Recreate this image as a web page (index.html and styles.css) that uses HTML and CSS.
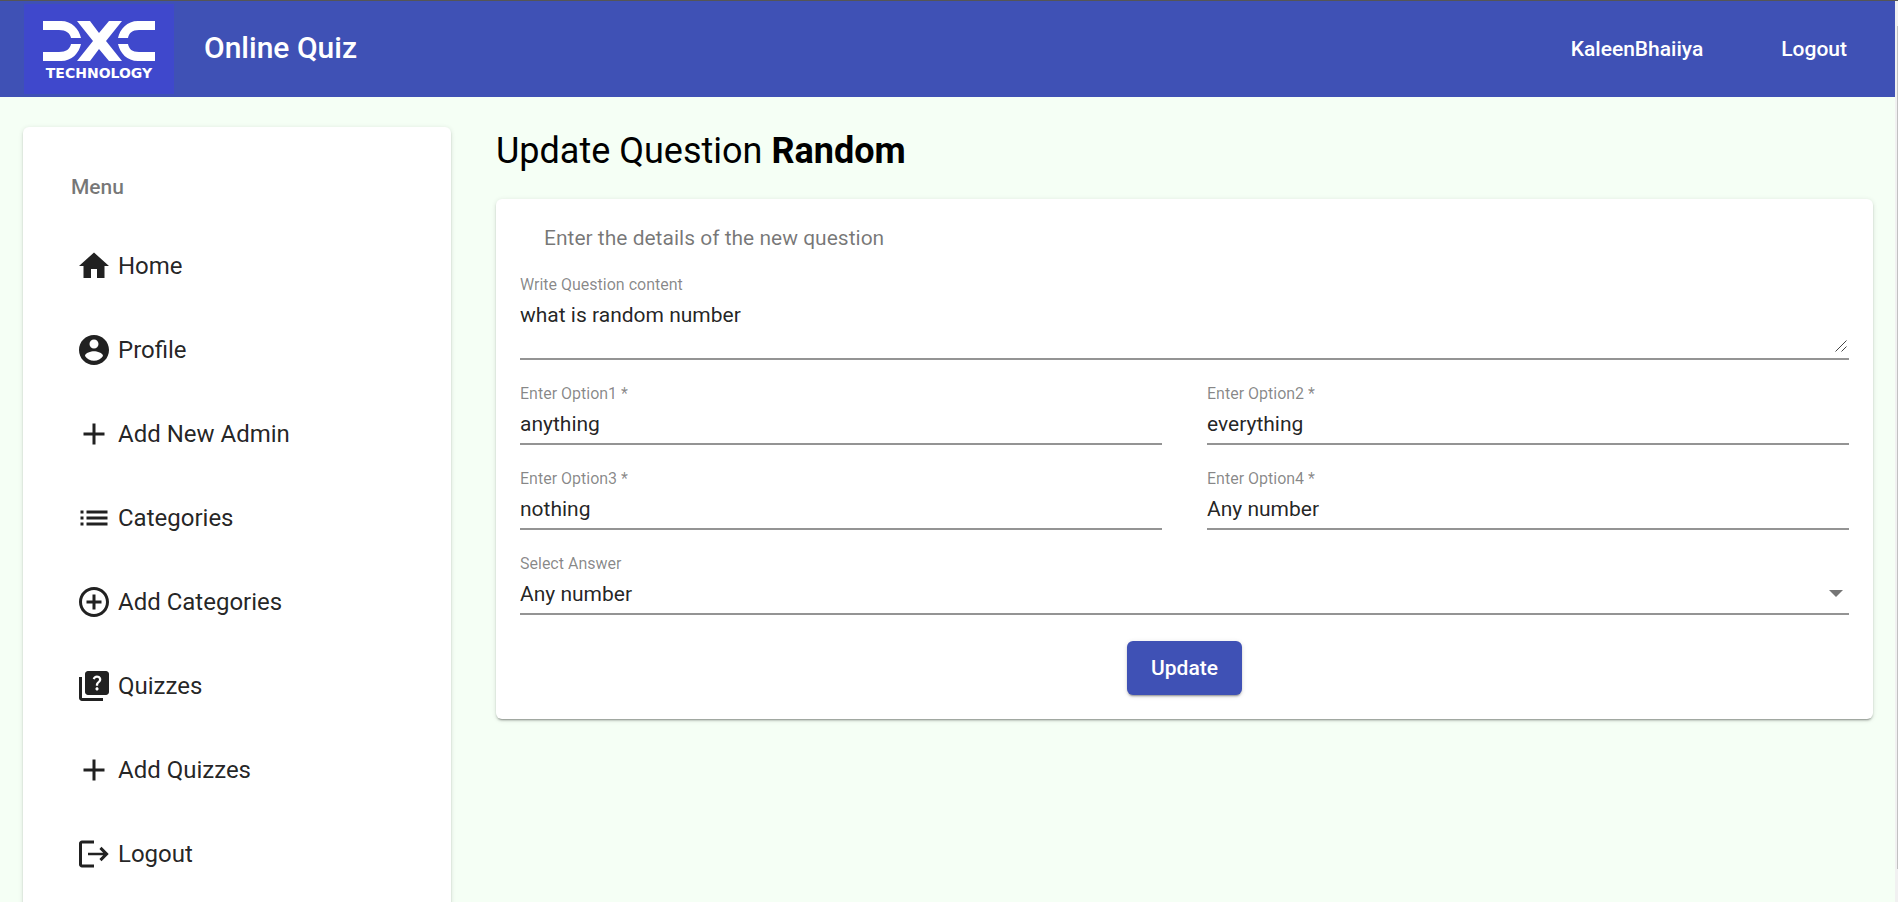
FILE: index.html
```html
<!DOCTYPE html>
<html lang="en">
<head>
<meta charset="utf-8">
<title>Online Quiz</title>
<link rel="stylesheet" href="styles.css">
</head>
<body>
<div class="viewport">
  <div class="page">
    <header class="toolbar">
      <a class="logo" href="#" aria-label="DXC Technology">
        <svg class="logo-mark" viewBox="0 0 112 40" aria-hidden="true">
          <path d="M0 0H18C29 0 36 8 38 17H28C27 12 23 9 16 9H0ZM0 40H18C29 40 36 32 38 23H28C27 28 23 31 16 31H0Z"/>
          <path d="M34 0H47L56 12L66 0H79L63 20L79 40H66L56 28L47 40H34L50 20Z"/>
          <path d="M112 0H95C84 0 77 8 75 17H85C86 12 89 9 96 9H112ZM112 40H95C84 40 77 32 75 23H85C86 28 89 31 96 31H112Z"/>
        </svg>
        <span class="logo-text">TECHNOLOGY</span>
      </a>
      <span class="brand">Online Quiz</span>
      <nav class="account">
        <a href="#">KaleenBhaiiya</a>
        <a href="#">Logout</a>
      </nav>
    </header>
    <div class="content">
      <aside class="card sidebar">
        <h2 class="menu-title">Menu</h2>
        <nav class="menu">
          <a href="#"><svg class="icon" viewBox="0 0 24 24"><path d="M10 20v-6h4v6h5v-8h3L12 3 2 12h3v8z"/></svg>Home</a>
          <a href="#"><svg class="icon" viewBox="0 0 24 24"><path d="M12 2C6.48 2 2 6.48 2 12s4.48 10 10 10 10-4.48 10-10S17.52 2 12 2zm0 3c1.66 0 3 1.34 3 3s-1.34 3-3 3-3-1.34-3-3 1.34-3 3-3zm0 14.2c-2.5 0-4.71-1.28-6-3.22.03-1.99 4-3.08 6-3.08 1.99 0 5.97 1.09 6 3.08-1.29 1.94-3.5 3.22-6 3.22z"/></svg>Profile</a>
          <a href="#"><svg class="icon" viewBox="0 0 24 24"><path d="M19 13h-6v6h-2v-6H5v-2h6V5h2v6h6v2z"/></svg>Add New Admin</a>
          <a href="#"><svg class="icon" viewBox="0 0 24 24"><path d="M3 13h2v-2H3v2zm0 4h2v-2H3v2zm0-8h2V7H3v2zm4 4h14v-2H7v2zm0 4h14v-2H7v2zM7 7v2h14V7H7z"/></svg>Categories</a>
          <a href="#"><svg class="icon" viewBox="0 0 24 24"><path d="M13 7h-2v4H7v2h4v4h2v-4h4v-2h-4V7zm-1-5C6.48 2 2 6.48 2 12s4.48 10 10 10 10-4.48 10-10S17.52 2 12 2zm0 18c-4.41 0-8-3.59-8-8s3.59-8 8-8 8 3.59 8 8-3.59 8-8 8z"/></svg>Add Categories</a>
          <a href="#"><svg class="icon" viewBox="0 0 24 24"><path d="M4 6H2v14c0 1.1.9 2 2 2h14v-2H4V6z"/><path d="M20 2H8c-1.1 0-2 .9-2 2v12c0 1.1.9 2 2 2h12c1.1 0 2-.9 2-2V4c0-1.1-.9-2-2-2zm-5.99 13c-.59 0-1.05-.47-1.05-1.05 0-.59.47-1.04 1.05-1.04.59 0 1.04.45 1.04 1.04-.01.58-.45 1.05-1.04 1.05zm2.5-6.17c-.63.93-1.23 1.21-1.56 1.81-.13.24-.18.4-.18 1.18h-1.52c0-.41-.06-1.08.26-1.65.41-.73 1.18-1.16 1.63-1.8.48-.68.21-1.94-1.14-1.94-.88 0-1.32.67-1.5 1.23l-1.37-.57C11.51 5.96 12.52 5 13.99 5c1.23 0 2.08.56 2.51 1.26.37.61.58 1.73.01 2.57z"/></svg>Quizzes</a>
          <a href="#"><svg class="icon" viewBox="0 0 24 24"><path d="M19 13h-6v6h-2v-6H5v-2h6V5h2v6h6v2z"/></svg>Add Quizzes</a>
          <a href="#"><svg class="icon" viewBox="0 0 24 24"><path d="M12 3H4c-1.1 0-2 .9-2 2v14c0 1.1.9 2 2 2h8v-2H4V5h8V3z"/><path d="M17 7.2l-1.4 1.4 2.5 2.5H8v1.8h10.100l-2.5 2.5 1.4 1.4 4.800-4.800z"/></svg>Logout</a>
        </nav>
      </aside>
      <main class="main">
        <h1 class="title">Update Question <b>Random</b></h1>
        <form class="card form">
          <p class="subtitle">Enter the details of the new question</p>
          <div class="field area">
            <label for="question">Write Question content</label>
            <textarea id="question" rows="1">what is random number</textarea>
            <svg class="grip" viewBox="0 0 12 12" aria-hidden="true"><path d="M0.5 11.5L11.5 0.5M6.5 11.5L11.5 6.5"/></svg>
          </div>
          <div class="options">
            <div class="field"><label for="o1">Enter Option1 *</label><input id="o1" type="text" value="anything"></div>
            <div class="field"><label for="o2">Enter Option2 *</label><input id="o2" type="text" value="everything"></div>
            <div class="field"><label for="o3">Enter Option3 *</label><input id="o3" type="text" value="nothing"></div>
            <div class="field"><label for="o4">Enter Option4 *</label><input id="o4" type="text" value="Any number"></div>
          </div>
          <div class="field select">
            <label for="answer">Select Answer</label>
            <select id="answer">
              <option>anything</option>
              <option>everything</option>
              <option>nothing</option>
              <option selected>Any number</option>
            </select>
            <svg class="arrow" viewBox="0 0 14 7" aria-hidden="true"><path d="M0 0H14L7 7Z"/></svg>
          </div>
          <button class="submit" type="button">Update</button>
        </form>
      </main>
    </div>
  </div>
  <div class="scrollbar" aria-hidden="true"><div class="thumb"></div></div>
</div>
</body>
</html>
```
FILE: styles.css
```css
* {
  box-sizing: border-box;
}

body {
  margin: 0;
  font-family: Roboto, "Liberation Sans", sans-serif;
  font-size: 21px;
  color: rgba(0, 0, 0, 0.87);
}

a {
  color: inherit;
  text-decoration: none;
}

.viewport {
  display: flex;
  height: 100vh;
  border-top: 1px solid #555;
  overflow: hidden;
}

.page {
  flex: 1;
  min-width: 0;
  overflow: hidden;
  background: #f5fff5;
}

.scrollbar {
  width: 3px;
  padding: 25px 0 33px 2px;
  background: #f1f1f1;
}

.thumb {
  height: 100%;
  background: #c1c1c1;
}

.toolbar {
  display: flex;
  align-items: center;
  height: 96px;
  padding: 0 48px 0 24px;
  background: #3f51b5;
  color: #fff;
  font-weight: 500;
}

.logo {
  display: flex;
  flex-direction: column;
  align-items: center;
  gap: 4px;
  width: 150px;
  height: 90px;
  padding-top: 17px;
  background: #3f48cc;
}

.logo-mark {
  width: 112px;
  height: 40px;
  fill: #fff;
}

.logo-text {
  font: bold 14px/16px "DejaVu Sans", sans-serif;
}

.brand {
  margin-left: 30px;
  font-size: 30px;
  line-height: 36px;
  padding-bottom: 2px;
}

.account {
  display: flex;
  gap: 78px;
  margin-left: auto;
}

.content {
  display: flex;
  align-items: flex-start;
  gap: 45px;
  padding: 30px 22px 24px 23px;
}

.card {
  background: #fff;
  border-radius: 6px;
  box-shadow: 0 3px 1px -2px rgba(0, 0, 0, 0.2), 0 2px 2px rgba(0, 0, 0, 0.14), 0 1px 5px rgba(0, 0, 0, 0.12);
}

.sidebar {
  flex: 0 0 428px;
  padding: 24px;
}

.menu-title {
  margin: 0;
  padding: 24px 24px 25px;
  font-size: 21px;
  line-height: 24px;
  font-weight: 500;
  color: rgba(0, 0, 0, 0.54);
}

.menu a {
  display: flex;
  align-items: center;
  gap: 6px;
  height: 84px;
  padding: 0 29px;
  font-size: 24px;
}

.icon {
  width: 36px;
  height: 36px;
  fill: #212121;
}

.main {
  flex: 1;
  min-width: 0;
}

.title {
  margin: 0 0 24px;
  font-size: 36px;
  line-height: 48px;
  font-weight: 400;
  color: #000;
}

.form {
  display: flex;
  flex-direction: column;
  padding: 24px;
}

.subtitle {
  margin: 0 0 23px;
  padding: 0 24px;
  line-height: 30px;
  color: rgba(0, 0, 0, 0.54);
}

.field {
  position: relative;
  display: flex;
  flex-direction: column;
  border-bottom: 2px solid #949494;
}

.field label {
  font-size: 16px;
  line-height: 18px;
  color: rgba(0, 0, 0, 0.48);
}

.field input,
.field textarea,
.field select {
  width: 100%;
  height: 40px;
  margin: 0;
  padding: 2px 0 0;
  border: 0;
  outline: 0;
  background: transparent;
  appearance: none;
  font: inherit;
  line-height: 24px;
  color: inherit;
}

.field textarea {
  height: 64px;
  padding-top: 9px;
  resize: none;
}

.grip {
  position: absolute;
  right: 2px;
  bottom: 6px;
  width: 12px;
  height: 12px;
  stroke: #444;
  stroke-width: 1;
}

.options {
  display: grid;
  grid-template-columns: 1fr 1fr;
  gap: 25px 45px;
  margin: 25px 0;
}

.arrow {
  position: absolute;
  right: 6px;
  bottom: 16px;
  width: 14px;
  height: 7px;
  fill: #757575;
}

.submit {
  align-self: center;
  margin-top: 26px;
  padding: 0 24px;
  height: 54px;
  border: 0;
  border-radius: 6px;
  background: #3f51b5;
  color: #fff;
  font: inherit;
  font-weight: 500;
  box-shadow: 0 3px 1px -2px rgba(0, 0, 0, 0.2), 0 2px 2px rgba(0, 0, 0, 0.14), 0 1px 5px rgba(0, 0, 0, 0.12);
}
```
